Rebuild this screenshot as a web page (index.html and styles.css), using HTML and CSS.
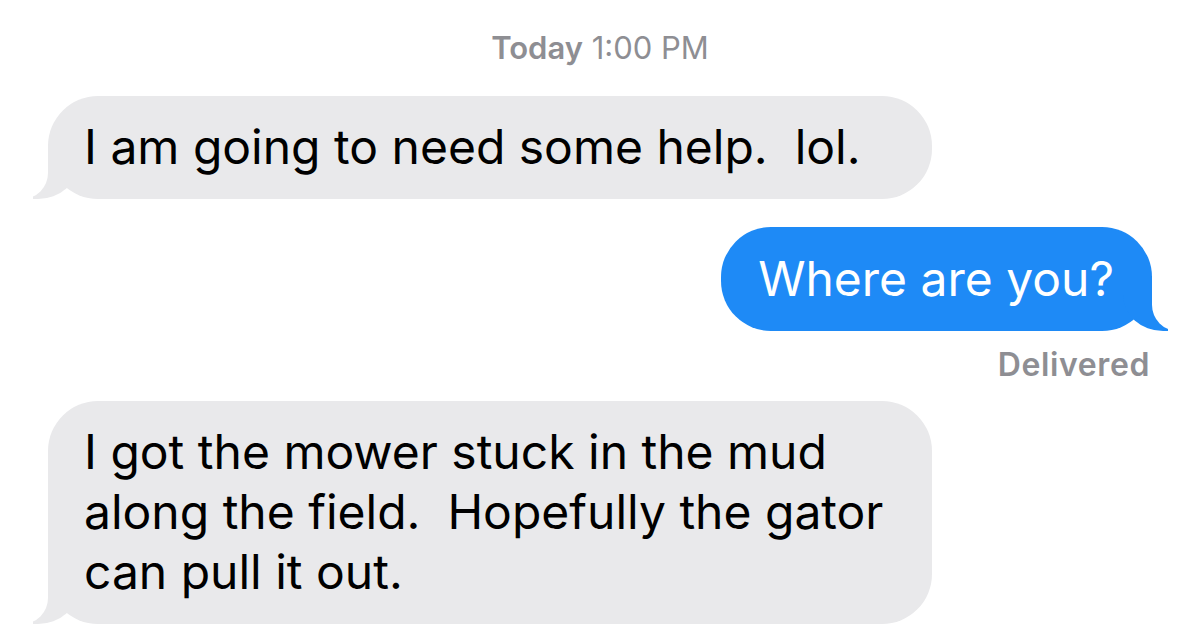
FILE: index.html
```html
<!DOCTYPE html>
<html lang="en">
<head>
    <meta charset="UTF-8">
    <meta name="viewport" content="width=device-width, initial-scale=1.0">
    <title>Messages</title>
    <link rel="stylesheet" href="styles.css">
</head>
<body>
    <div class="chat">
        <div class="timestamp"><b>Today</b> 1:00 PM</div>

        <div class="bubble in">I am going to need some help.&nbsp; lol.</div>

        <div class="bubble out">Where are you?</div>
        <div class="status">Delivered</div>

        <div class="bubble in">I got the mower stuck in the mud<br>along the field.&nbsp; Hopefully the gator<br>can pull it out.</div>
    </div>
</body>
</html>
```

FILE: styles.css
```css
/* Reset */
* {
    margin: 0;
    padding: 0;
    box-sizing: border-box;
}

body {
    font-family: Inter, "Noto Sans", sans-serif;
    background-color: #fff;
    color: #000;
    overflow: hidden;
}

.chat {
    display: flex;
    flex-direction: column;
    padding: 30px 48px 0 48px;
}

.timestamp {
    align-self: center;
    font-size: 31px;
    line-height: 36px;
    color: #8e8e93;
    margin-bottom: 30px;
}

.timestamp b {
    font-weight: 600;
}

.bubble {
    position: relative;
    font-size: 48px;
    line-height: 60px;
    border-radius: 50px;
    padding: 21px 36px 22px 36px;
}

.bubble.in {
    align-self: flex-start;
    width: 884px;
    background-color: #e9e9eb;
}

.bubble.out {
    align-self: flex-end;
    background-color: #1e8af6;
    color: #fff;
    padding: 22px 38px 22px 37px;
    margin-top: 28px;
}

/* tails */
.bubble.in::before,
.bubble.in::after,
.bubble.out::before,
.bubble.out::after {
    content: "";
    position: absolute;
    bottom: 0;
    height: 55px;
}

.bubble.in::before {
    left: -15px;
    width: 45px;
    background-color: #e9e9eb;
    border-bottom-right-radius: 40px 36px;
    z-index: 0;
}

.bubble.in::after {
    left: -55px;
    width: 55px;
    background-color: #fff;
    border-bottom-right-radius: 26px;
    z-index: 1;
}

.bubble.out::before {
    right: -16px;
    width: 45px;
    background-color: #1e8af6;
    border-bottom-left-radius: 40px 36px;
    z-index: 0;
}

.bubble.out::after {
    right: -55px;
    width: 55px;
    background-color: #fff;
    border-bottom-left-radius: 26px;
    z-index: 1;
}

.status {
    align-self: flex-end;
    font-size: 32px;
    line-height: 36px;
    font-weight: 600;
    letter-spacing: 0.6px;
    color: #8e8e93;
    margin: 16px 2px 18px 0;
}
```
